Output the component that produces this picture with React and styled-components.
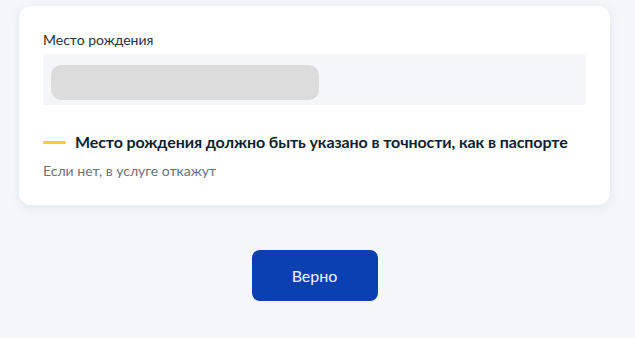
import React from "react";
import styled, { createGlobalStyle } from "styled-components";

const GlobalStyle = createGlobalStyle`
  html, body {
    margin: 0;
    padding: 0;
    background: #f4f6fa;
    font-family: Lato, "Noto Sans", sans-serif;
  }
`;

const Page = styled.div`
  width: 635px;
  height: 338px;
  box-sizing: border-box;
  padding: 6px 25px 0 19px;
  display: flex;
  flex-direction: column;
  align-items: center;
`;

const Card = styled.section`
  align-self: stretch;
  background: #fff;
  border-radius: 12px;
  box-shadow: 0 2px 10px rgba(102, 119, 153, 0.12);
  padding: 24px 24px 24px;
  display: flex;
  flex-direction: column;
`;

const Label = styled.div`
  font-size: 14px;
  line-height: 20px;
  color: #233345;
  margin-bottom: 4px;
`;

const Field = styled.div`
  height: 51px;
  background: #f5f6f8;
  border-radius: 2px;
  box-sizing: border-box;
  padding: 11px 8px;
  display: flex;
`;

const Skeleton = styled.div`
  width: 268px;
  height: 35px;
  border-radius: 10px;
  background: #dcdcdc;
`;

const Notice = styled.div`
  margin-top: 25px;
  display: flex;
  align-items: center;
  gap: 9px;
`;

const Dash = styled.span`
  width: 23px;
  height: 3px;
  border-radius: 2px;
  background: #fcc935;
  flex-shrink: 0;
`;

const Title = styled.div`
  font-size: 16px;
  font-weight: 700;
  line-height: 24px;
  color: #0b1f33;
  letter-spacing: -0.1px;
`;

const Hint = styled.div`
  font-size: 14px;
  line-height: 20px;
  color: #66727f;
  margin-top: 7px;
`;

const Button = styled.button`
  margin-top: 45px;
  width: 126px;
  height: 51px;
  border: none;
  border-radius: 8px;
  background: #0b40b3;
  color: #f2f6ff;
  font-family: Lato, "Noto Sans", sans-serif;
  font-size: 16px;
  cursor: pointer;
`;

export default function App() {
  return (
    <>
      <GlobalStyle />
      <Page>
        <Card>
          <Label>Место рождения</Label>
          <Field>
            <Skeleton />
          </Field>
          <Notice>
            <Dash />
            <Title>Место рождения должно быть указано в точности, как в паспорте</Title>
          </Notice>
          <Hint>Если нет, в услуге откажут</Hint>
        </Card>
        <Button>Верно</Button>
      </Page>
    </>
  );
}
